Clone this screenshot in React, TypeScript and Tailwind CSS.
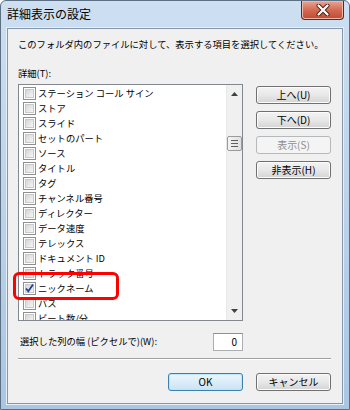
import React from 'react'

const items = [
  'ステーション コール サイン',
  'ストア',
  'スライド',
  'セットのパート',
  'ソース',
  'タイトル',
  'タグ',
  'チャンネル番号',
  'ディレクター',
  'データ速度',
  'テレックス',
  'ドキュメント ID',
  'トラック番号',
  'ニックネーム',
  'パス',
  'ビート数/分',
]

const font = { fontFamily: '"Noto Sans CJK JP", "Noto Sans", sans-serif' }

function Check({ checked }: { checked: boolean }) {
  return (
    <div className="flex h-[13px] w-[13px] shrink-0 items-center justify-center border border-[#8f8f8f] bg-white">
      <div className="relative h-[9px] w-[9px] border border-[#c9c9c9] bg-gradient-to-br from-[#d6d6d6] to-[#f6f6f6]">
        {checked && (
          <svg viewBox="0 0 11 11" className="absolute left-[-2px] top-[-2px] h-[11px] w-[11px]">
            <path d="M2 5.5 L4.3 8.3 L9 1.5" fill="none" stroke="#1e3f9a" strokeWidth="1.8" />
          </svg>
        )}
      </div>
    </div>
  )
}

function Button({ label, disabled, primary }: { label: string; disabled?: boolean; primary?: boolean }) {
  const base = 'flex h-[18px] w-[75px] items-center justify-center rounded-[3px] border text-[10px] leading-none'
  if (disabled)
    return <div className={`${base} border-[#b5b9bc] bg-[#f4f4f4] text-[#8d8d8d]`}>{label}</div>
  if (primary)
    return (
      <div className={`${base} border-[#3c7fb1] bg-gradient-to-b from-[#eaf6fd] via-[#dcedf8] to-[#c9e3f4] text-black shadow-[inset_0_0_0_1px_#bde6fd]`}>
        {label}
      </div>
    )
  return (
    <div className={`${base} border-[#707070] bg-gradient-to-b from-[#f3f3f3] via-[#e8e8e8] to-[#d4d4d4] text-black shadow-[inset_0_0_0_1px_#fcfcfc]`}>
      {label}
    </div>
  )
}

export default function App() {
  return (
    <div
      className="relative h-[410px] w-[350px] overflow-hidden rounded-t-[6px] border border-[#5d6f83] bg-gradient-to-b from-[#cddff1] via-[#bcd3ea] to-[#a9c6e3]"
      style={font}
    >
      {/* Barre de titre */}
      <div className="flex h-[27px] items-start justify-between">
        <div className="pl-[6px] pt-[5px] text-[12px] leading-[16px] text-black">詳細表示の設定</div>
        <div className="mr-[5px] flex h-[19px] w-[43px] items-center justify-center rounded-b-[4px] border border-t-0 border-[#5a2a22] bg-gradient-to-b from-[#e8a594] via-[#d26a52] to-[#c04a2f] shadow-[inset_0_0_0_1px_#f0b8a8]">
          <svg viewBox="0 0 16 12" className="h-[12px] w-[16px]">
            <path d="M3.5 1.5 L12.5 10.5 M12.5 1.5 L3.5 10.5" stroke="#4a1a12" strokeWidth="4" strokeLinecap="round" />
            <path d="M3.5 1.5 L12.5 10.5 M12.5 1.5 L3.5 10.5" stroke="#ffffff" strokeWidth="2.3" strokeLinecap="round" />
          </svg>
        </div>
      </div>

      {/* Zone client */}
      <div className="mx-[6px] h-[376px] border border-[#8597aa] bg-[#f0f0f0] pl-[10px] pr-[11px] text-black shadow-[0_0_0_1px_#e6eef7]">
        <div className="whitespace-nowrap pt-[9px] text-[9.3px] leading-[13px]">
          このフォルダ内のファイルに対して、表示する項目を選択してください。
        </div>
        <div className="mt-[16px] text-[9.3px] leading-[13px]">詳細(T):</div>

        <div className="mt-[4px] flex gap-[13px]">
          {/* Liste */}
          <div className="flex h-[237px] w-[225px] border border-[#828790] bg-white">
            <div className="flex-1 overflow-hidden pt-[1px]">
              {items.map((it) => (
                <div key={it} className="flex h-[15px] items-center gap-[2px] pl-[4px]">
                  <Check checked={it === 'ニックネーム'} />
                  <span className="whitespace-nowrap text-[9.3px] leading-none">{it}</span>
                </div>
              ))}
            </div>
            <div className="flex w-[16px] flex-col items-center border-l border-[#e8e8e8] bg-[#f0f0f0]">
              <div className="flex h-[16px] w-full items-center justify-center pt-[1px]">
                <svg viewBox="0 0 7 4" className="h-[4px] w-[7px]">
                  <path d="M0 4 L3.5 0 L7 4 Z" fill="#404040" />
                </svg>
              </div>
              <div className="mt-[35px] flex h-[15px] w-[15px] flex-col items-center justify-center gap-[2px] rounded-[2px] border border-[#9a9a9a] bg-gradient-to-r from-[#f4f4f4] to-[#e0e0e0]">
                <div className="h-px w-[7px] bg-[#606060]" />
                <div className="h-px w-[7px] bg-[#606060]" />
                <div className="h-px w-[7px] bg-[#606060]" />
              </div>
              <div className="flex-1" />
              <div className="flex h-[16px] w-full items-center justify-center pb-[2px]">
                <svg viewBox="0 0 7 4" className="h-[4px] w-[7px]">
                  <path d="M0 0 L3.5 4 L7 0 Z" fill="#404040" />
                </svg>
              </div>
            </div>
          </div>

          {/* Boutons */}
          <div className="flex flex-col gap-[7px] pt-[2px]">
            <Button label="上へ(U)" />
            <Button label="下へ(D)" />
            <Button label="表示(S)" disabled />
            <Button label="非表示(H)" />
          </div>
        </div>

        <div className="mt-[12px] flex w-[225px] items-center justify-between">
          <span className="pl-[2px] text-[9.3px] leading-none">選択した列の幅 (ピクセルで)(W):</span>
          <div className="flex h-[18px] w-[30px] items-center justify-end border border-[#abadb3] border-t-[#8e8f8f] bg-white pr-[5px] text-[10px] leading-none">
            0
          </div>
        </div>

        <div className="mt-[7px] h-[2px] border-t border-b border-t-[#a0a0a0] border-b-white" />

        <div className="mt-[13px] flex justify-end gap-[13px]">
          <Button label="OK" primary />
          <Button label="キャンセル" />
        </div>
      </div>

      {/* Annotation */}
      <div className="absolute left-[12px] top-[271px] h-[28px] w-[106px] rounded-[6px] border-[3px] border-[#ff0000]" />
    </div>
  )
}
